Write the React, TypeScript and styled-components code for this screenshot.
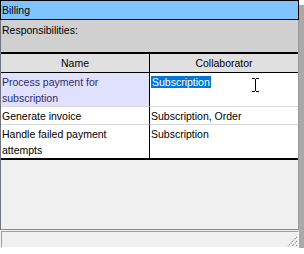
import styled, { createGlobalStyle } from 'styled-components'

const GlobalStyle = createGlobalStyle`
  body {
    margin: 0;
    background: #fff;
    font-family: 'Liberation Sans', Arial, sans-serif;
    font-size: 10.5px;
    color: #000;
  }
`

const Window = styled.div`
  width: 299px;
  height: 248px;
  display: flex;
  flex-direction: column;
  background: #f0f0f0;
  box-shadow: 5px 5px 0 #a9a9a9;
`

const TitleBar = styled.div`
  height: 20px;
  box-sizing: border-box;
  border: 1px solid #000;
  background: #80c4ff;
  padding: 1px 1px;
  line-height: 16px;
`

const Body = styled.div`
  flex: 1;
  display: flex;
  flex-direction: column;
  border-left: 1px solid #6e7480;
  border-right: 1px solid #9a9a9a;
  border-bottom: 1px solid #888;
`

const Responsibilities = styled.div`
  height: 32px;
  box-sizing: border-box;
  padding: 2px 1px;
  line-height: 16px;
  background: #d0d0d0;
`

const Table = styled.div`
  display: grid;
  grid-template-columns: 149px 148px;
  border-top: 2px solid #000;
  border-bottom: 2px solid #000;
  background: #fff;
`

const HeaderCell = styled.div<{ $first?: boolean }>`
  height: 19px;
  box-sizing: border-box;
  padding-top: 1px;
  line-height: 16px;
  text-align: center;
  background: #e0e0e0;
  border-bottom: 1px solid #000;
  border-right: ${({ $first }) => ($first ? '1px solid #000' : 'none')};
`

const Cell = styled.div<{ $first?: boolean; $selected?: boolean; $last?: boolean }>`
  position: relative;
  padding: 1px 1px 0;
  line-height: 16px;
  background: ${({ $selected }) => ($selected ? '#e0e0ff' : '#fff')};
  color: ${({ $selected }) => ($selected ? '#2c2c6c' : '#000')};
  border-right: ${({ $first }) => ($first ? '1px solid #000' : 'none')};
  border-bottom: ${({ $last }) => ($last ? 'none' : '1px solid #d8d8d8')};
`

const Highlight = styled.span`
  background: #0078d7;
  color: #fff;
  padding: 0 1px 0 1px;
`

const Cursor = styled.svg`
  position: absolute;
  left: 102px;
  top: 5px;
`

const Filler = styled.div`
  flex: 1;
  background: #f0f0f0;
`

const StatusBar = styled.div`
  height: 17px;
  box-sizing: border-box;
  margin: 1px 0 0 1px;
  border-top: 1px solid #a0a0a0;
  border-left: 1px solid #a0a0a0;
  border-bottom: 1px solid #fff;
  border-right: 1px solid #fff;
  display: flex;
  justify-content: flex-end;
  align-items: flex-end;
`

const rows = [
  { name: ['Process payment for', 'subscription'], collaborator: 'Subscription', selected: true },
  { name: ['Generate invoice'], collaborator: 'Subscription, Order' },
  { name: ['Handle failed payment', 'attempts'], collaborator: 'Subscription' },
]

const App = () => {
  return (
    <>
      <GlobalStyle />
      <Window>
        <TitleBar>Billing</TitleBar>
        <Body>
          <Responsibilities>Responsibilities:</Responsibilities>
          <Table>
            <HeaderCell $first>Name</HeaderCell>
            <HeaderCell>Collaborator</HeaderCell>
            {rows.map((row, index) => {
              const last = index === rows.length - 1
              return [
                <Cell key={`n${index}`} $first $selected={row.selected} $last={last}>
                  {row.name.map((line) => (
                    <div key={line}>{line}</div>
                  ))}
                </Cell>,
                <Cell key={`c${index}`} $last={last}>
                  {row.selected ? <Highlight>{row.collaborator}</Highlight> : row.collaborator}
                  {row.selected && (
                    <Cursor width="7" height="14" viewBox="0 0 7 14">
                      <path d="M0 0.5h3M4 0.5h3M3.5 1v12M0 13.5h3M4 13.5h3" stroke="#000" strokeWidth="1" fill="none" />
                    </Cursor>
                  )}
                </Cell>,
              ]
            })}
          </Table>
          <Filler />
        </Body>
        <StatusBar>
          <svg width="12" height="12" viewBox="0 0 12 12">
            <path d="M11 2L2 11M11 6L6 11M11 10L10 11" stroke="#8a8a8a" strokeWidth="1.2" strokeDasharray="1 1" />
            <path d="M12 3L3 12M12 7L7 12" stroke="#fff" strokeWidth="0.8" />
          </svg>
        </StatusBar>
      </Window>
    </>
  )
}

export default App
